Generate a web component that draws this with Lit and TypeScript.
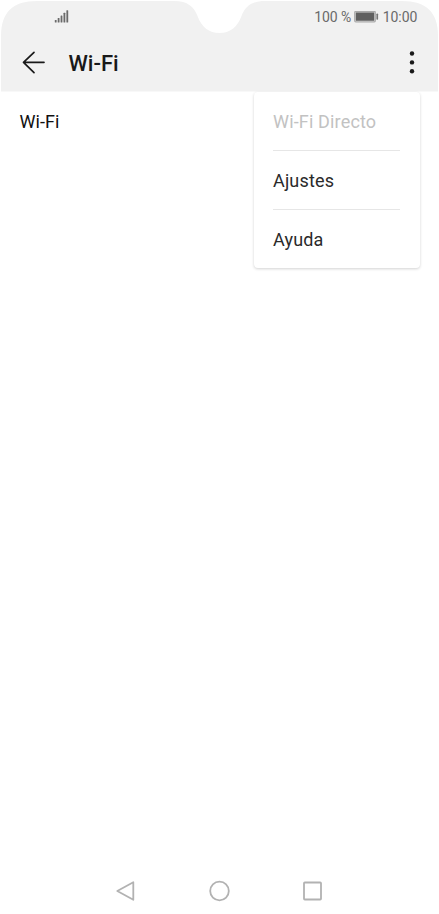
import { LitElement, html, css } from "lit";
import { customElement, property } from "lit/decorators.js";

@customElement("status-bar")
class StatusBar extends LitElement {
  static styles = css`
    :host { display: flex; justify-content: space-between; align-items: center; height: 31px; padding: 0 20.5px 2px 53px; color: #6a6a6a; }
    svg { display: block; }
    .right { display: flex; align-items: center; font-size: 14px; line-height: 16px; }
    .percent { letter-spacing: -0.1px; }
    .battery { margin: 0 3.5px 0 3px; }
  `;
  render() {
    return html`
      <svg width="15" height="14" viewBox="0 0 15 14" fill="#6a6a6a">
        <rect x="0.8" y="10" width="1.8" height="2.4" rx=".5" />
        <rect x="3.7" y="8" width="1.8" height="4.4" rx=".5" />
        <rect x="6.6" y="5.4" width="1.8" height="7" rx=".5" />
        <rect x="9.5" y="2.8" width="1.8" height="9.6" rx=".5" />
        <rect x="12.4" y="0.2" width="1.8" height="12.2" rx=".5" />
      </svg>
      <div class="right">
        <span class="percent">100 %</span>
        <svg class="battery" width="25" height="12" viewBox="0 0 25 12">
          <rect x="0.700" y="0.400" width="20.600" height="10.400" rx="1" fill="none" stroke="#aaa" stroke-width="1.200" />
          <rect x="1.700" y="1.400" width="18.600" height="8.400" fill="#606060" />
          <rect x="22.400" y="2.500" width="1.700" height="6.200" rx=".8" fill="#777" />
        </svg>
        <span>10:00</span>
      </div>
    `;
  }
}

@customElement("menu-item")
class MenuItem extends LitElement {
  @property() label = "";
  @property({ type: Boolean, reflect: true }) disabled = false;
  static styles = css`
    :host { display: flex; align-items: center; height: 58px; color: #2a2a2a; font-size: 18px; letter-spacing: 0.16px; }
    :host([disabled]) { color: #c2c2c2; }
  `;
  render() {
    return html`<span>${this.label}</span>`;
  }
}

@customElement("app-root")
class AppRoot extends LitElement {
  static styles = css`
    :host { display: block; font-family: Roboto, sans-serif; background: #fff; }
    .screen { position: relative; display: flex; flex-direction: column; height: 914px; overflow: hidden; }
    .header { position: relative; box-sizing: border-box; height: 91.5px; margin: 0 1px; padding-top: 1px; }
    .shape { position: absolute; left: 0; top: 0; display: block; }
    .content { position: relative; }
    .bar { display: flex; align-items: center; height: 57px; padding: 0 19px 0 21px; }
    .bar svg { display: block; }
    h1 { flex: 1; margin: 0 0 0 22.5px; font-size: 22px; font-weight: 500; line-height: 28px; color: #191919; padding-top: 2px; }
    .row { flex: 1; padding: 19px 19.5px; font-size: 18px; line-height: 22px; letter-spacing: 0.08px; color: #111; }
    .menu { position: absolute; right: 19.5px; top: 92px; width: 166px; height: 176px; box-sizing: border-box; padding: 0 19.500px; background: #fff; border-radius: 4px; box-shadow: 0 1px 3px rgba(0, 0, 0, 0.18); }
    menu-item + menu-item { border-top: 1px solid #e6e6e6; }
    .nav { display: flex; justify-content: center; gap: 69px; height: 47px; align-items: center; }
    .nav svg { display: block; }
  `;
  render() {
    return html`
      <div class="screen">
        <header class="header">
          <svg class="shape" width="437" height="92" viewBox="0 0 437 92">
            <path fill="#f1f1f1" d="M0 91.5V36C0 12 12 1 36 1H173C187 1 193 7 196.500 16C200.500 27 208 33 218.500 33C229 33 236.500 27 240.500 16C244 7 250 1 264 1H401C425 1 437 12 437 36V91.5Z" />
          </svg>
          <div class="content">
            <status-bar></status-bar>
            <div class="bar">
              <svg width="24" height="24" viewBox="0 0 24 24" fill="none" stroke="#191919" stroke-width="1.7" stroke-linecap="round" stroke-linejoin="round">
                <path d="M22 11.300H1.500M12 1.300L1.500 11.300L12 21.600" />
              </svg>
              <h1>Wi-Fi</h1>
              <svg width="14" height="24" viewBox="0 0 14 24" fill="#191919">
                <circle cx="7" cy="2.500" r="2.2" /><circle cx="7" cy="11.400" r="2.2" /><circle cx="7" cy="20.200" r="2.2" />
              </svg>
            </div>
          </div>
        </header>
        <main class="row">Wi-Fi</main>
        <nav class="nav">
          <svg width="24" height="24" viewBox="0 0 24 24" fill="none" stroke="#b2b2b2" stroke-width="1.8" stroke-linejoin="round"><path d="M2.300 12L18.300 3.200V20.800Z" /></svg>
          <svg width="24" height="24" viewBox="0 0 24 24" fill="none" stroke="#b2b2b2" stroke-width="1.8"><circle cx="11.500" cy="12" r="9.300" /></svg>
          <svg width="24" height="24" viewBox="0 0 24 24" fill="none" stroke="#b2b2b2" stroke-width="1.8"><rect x="3" y="3.500" width="17" height="17" rx=".8" /></svg>
        </nav>
        <div class="menu">
          <menu-item label="Wi-Fi Directo" disabled></menu-item>
          <menu-item label="Ajustes"></menu-item>
          <menu-item label="Ayuda"></menu-item>
        </div>
      </div>
    `;
  }
}
